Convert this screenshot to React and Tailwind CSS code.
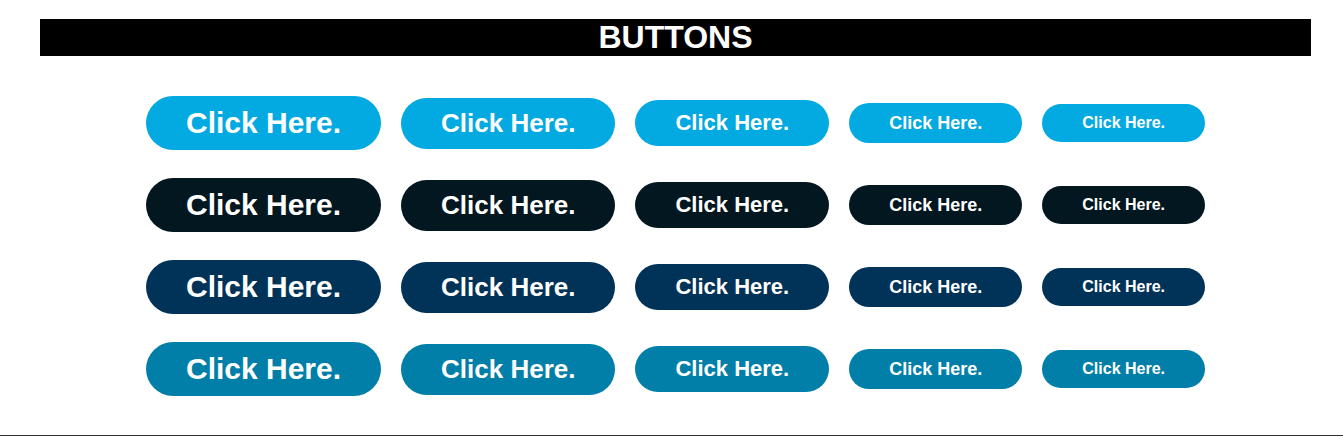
import React from "react";

const rows = [
  "bg-[#03a9e1]",
  "bg-[#02171f]",
  "bg-[#013358]",
  "bg-[#017fa8]",
];

const sizes = [
  "h-[54px] text-[30px]",
  "h-[51px] text-[26px]",
  "h-[46px] text-[22px]",
  "h-[40px] text-[18px]",
  "h-[38px] text-[16px]",
];

export default function App() {
  return (
    <div className="w-[1343px] bg-white pt-[19px]" style={{ fontFamily: '"Liberation Sans", Arial, sans-serif' }}>
      <div className="ml-[40px] w-[1271px]">
        <div className="h-[37px] bg-black text-white font-bold text-[32px] leading-[37px] text-center">
          BUTTONS
        </div>
        <div className="mt-[40px] mb-[39px] flex flex-col gap-[28px]">
          {rows.map((bg, r) => (
            <div key={r} className="flex items-center justify-center gap-[20px] h-[54px]">
              {sizes.map((s, c) => (
                <button
                  key={c}
                  className={`${bg} ${s} rounded-full px-[40px] flex items-center justify-center text-white font-bold leading-none whitespace-nowrap`}
                >
                  Click Here.
                </button>
              ))}
            </div>
          ))}
        </div>
      </div>
      <div className="h-px bg-[#333333]" />
    </div>
  );
}
